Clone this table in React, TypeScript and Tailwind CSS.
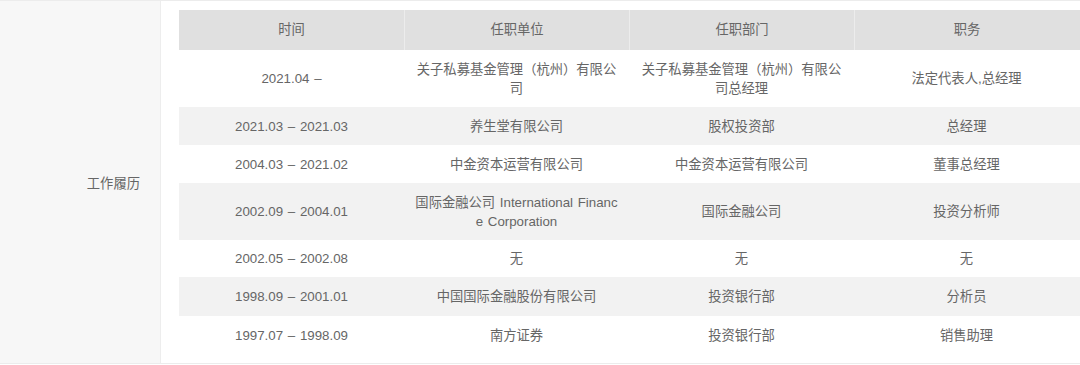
import React from "react";

const rows: { t: string; u: string; d: string; p: string; h: number }[] = [
  { t: "2021.04 –", u: "关子私募基金管理（杭州）有限公司", d: "关子私募基金管理（杭州）有限公司总经理", p: "法定代表人,总经理", h: 57 },
  { t: "2021.03 – 2021.03", u: "养生堂有限公司", d: "股权投资部", p: "总经理", h: 38 },
  { t: "2004.03 – 2021.02", u: "中金资本运营有限公司", d: "中金资本运营有限公司", p: "董事总经理", h: 38 },
  { t: "2002.09 – 2004.01", u: "国际金融公司 International Finance Corporation", d: "国际金融公司", p: "投资分析师", h: 57 },
  { t: "2002.05 – 2002.08", u: "无", d: "无", p: "无", h: 37 },
  { t: "1998.09 – 2001.01", u: "中国国际金融股份有限公司", d: "投资银行部", p: "分析员", h: 39 },
  { t: "1997.07 – 1998.09", u: "南方证券", d: "投资银行部", p: "销售助理", h: 38 },
];

export default function App() {
  return (
    <div
      className="w-[1080px] h-[365px] bg-white text-[13.3px] text-[#666] overflow-hidden"
      style={{ fontFamily: '"Liberation Sans", "Noto Sans CJK SC", sans-serif' }}
    >
      <div className="flex border-t border-b border-[#ececec] h-[364px]">
        <div className="w-[161px] shrink-0 bg-[#f7f7f7] border-r border-[#ededed] flex items-center justify-end pr-[20px] pt-[4px]">
          工作履历
        </div>
        <div className="flex-1 pl-[18px] pt-[9px]">
          <div className="flex flex-col w-[901px]">
            <div className="flex h-[40px] bg-[#e0e0e0]">
              {["时间", "任职单位", "任职部门", "职务"].map((h, i) => (
                <div
                  key={h}
                  className={
                    "w-[225px] flex items-center justify-center " +
                    (i > 0 ? "border-l border-[#ececec]" : "")
                  }
                >
                  {h}
                </div>
              ))}
            </div>
            {rows.map((r, idx) => (
              <div
                key={idx}
                className={"flex " + (idx % 2 === 1 ? "bg-[#f2f2f2]" : "bg-white")}
                style={{ height: r.h }}
              >
                {[r.t, r.u, r.d, r.p].map((c, j) => (
                  <div
                    key={j}
                    className="w-[225px] flex items-center justify-center text-center px-[10px] leading-[19px] break-all [word-spacing:1px]"
                  >
                    {c}
                  </div>
                ))}
              </div>
            ))}
          </div>
        </div>
      </div>
    </div>
  );
}
